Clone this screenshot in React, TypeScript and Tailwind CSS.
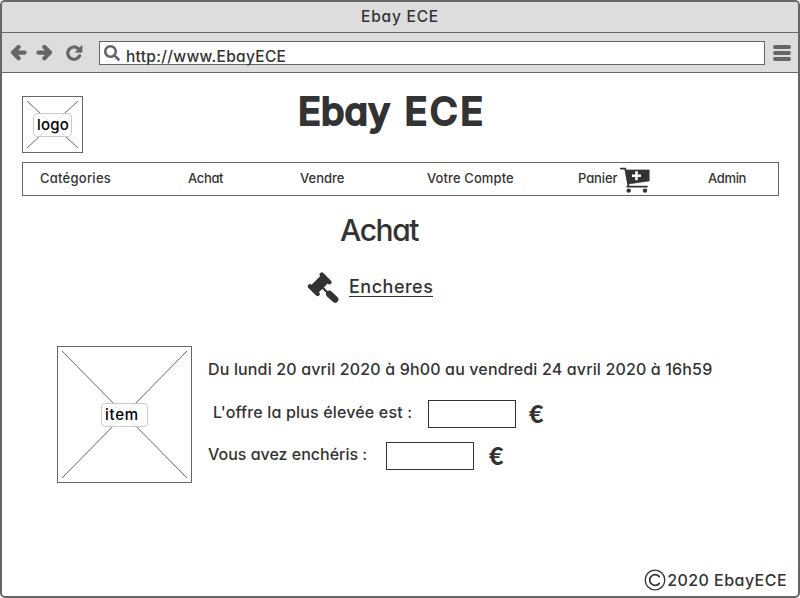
import { FaSearch } from "react-icons/fa";

function ArrowIcon({ flip = false }: { flip?: boolean }) {
  return (
    <svg width="17" height="16" viewBox="0 0 17 16" className={flip ? "-scale-x-100" : ""} fill="none" stroke="#666" strokeWidth="4.2" strokeLinecap="round" strokeLinejoin="round">
      <path d="M8.600 2 3 7.600l5.600 5.600M3.500 7.600H14.600" />
      <path d="M7.500 4.100v7L4 7.600z" strokeWidth="1" fill="#666" />
    </svg>
  );
}

function ReloadIcon() {
  return (
    <svg width="17" height="16" viewBox="0 0 17 16" fill="none" className="ml-[13px] shrink-0">
      <path d="M12.200 3.600A6.200 6.200 0 1 0 13.600 10.800" stroke="#666" strokeWidth="3.200" strokeLinecap="round" />
      <path d="M16 .6v6.600H9.400z" fill="#666" stroke="#666" strokeWidth=".8" strokeLinejoin="round" />
    </svg>
  );
}

function GavelIcon() {
  return (
    <svg width="33" height="32" viewBox="0 0 33 32" fill="none" stroke="#333" className="shrink-0">
      <path d="M14.800 2.600 22.400 10.200M3 14.400l7.600 7.600" strokeWidth="4.400" strokeLinecap="round" />
      <path d="M18 6.800 7 17.800" strokeWidth="10.400" />
      <path d="m14 14 7 7" strokeWidth="2.200" />
      <path d="m22.300 22 5.800 5.400" strokeWidth="6.600" strokeLinecap="round" />
    </svg>
  );
}

function CartIcon() {
  return (
    <svg width="31" height="27" viewBox="0 0 31 27" className="shrink-0">
      <path d="M.800 1.600h4.400l3.200 17.200" fill="none" stroke="#333" strokeWidth="1.700" strokeLinecap="round" />
      <path d="M6 2.900h23.200v11L8 17z" fill="#333" stroke="#333" strokeWidth=".6" strokeLinejoin="round" />
      <path d="M16.500 4.300v9M12 8.800h9" stroke="#fff" strokeWidth="2.600" />
      <path d="M7.200 19.600h19.800" stroke="#333" strokeWidth="1.700" strokeLinecap="round" />
      <circle cx="8.700" cy="23.600" r="2.200" fill="#333" />
      <circle cx="25" cy="23.600" r="2.200" fill="#333" />
    </svg>
  );
}

function Placeholder({ label, box, tag }: { label: string; box: string; tag: string }) {
  return (
    <div className={"relative shrink-0 border border-[#666] p-1 " + box}>
      <svg className="block h-full w-full" viewBox="0 0 100 100" preserveAspectRatio="none" stroke="#666">
        <path d="M0 0 100 100M100 0 0 100" vectorEffect="non-scaling-stroke" strokeWidth="1" />
      </svg>
      <span className={"absolute flex h-6 items-center rounded-[4px] border border-[#ccc] bg-white/80 pb-[2px] text-[15px] leading-none text-black " + tag}>
        {label}
      </span>
    </div>
  );
}

const nav = [
  { label: "Catégories", cls: "pl-px tracking-[0.25px]" },
  { label: "Achat", cls: "tracking-[-0.35px]" },
  { label: "Vendre", cls: "" },
  { label: "Votre Compte", cls: "tracking-[0.1px]" },
  { label: "Panier", cls: "pl-px tracking-[-0.1px]", cart: true },
  { label: "Admin", cls: "tracking-[-0.35px]" },
];

function Euro({ cls }: { cls: string }) {
  return <span className={"pb-[2px] font-['Lato',sans-serif] text-[25px] leading-none font-black " + cls}>€</span>;
}

export default function App() {
  return (
    <div className="flex h-[598px] w-[800px] flex-col overflow-hidden rounded-[5px] border-2 border-[#666] bg-white font-['Inter',sans-serif] font-medium whitespace-nowrap text-[#333] [font-feature-settings:'cv11']">
      <div className="flex h-[31px] shrink-0 items-center justify-center border-b border-[#666] bg-[#ddd] pb-px text-[15.5px] leading-none tracking-[0.8px]">
        Ebay ECE
      </div>
      <div className="flex h-10 shrink-0 items-center border-b border-[#666] bg-[#ddd] pl-2 text-[#666]">
        <ArrowIcon />
        <span className="ml-[9px]"><ArrowIcon flip /></span>
        <ReloadIcon />
        <div className="ml-4 flex h-6 w-[666px] shrink-0 items-start border border-[#666] bg-white pl-1">
          <FaSearch size={16} className="mt-[3px]" />
          <span className="mt-[7px] ml-[6px] text-[15.5px] leading-none tracking-[0.3px] text-[#333]">http://www.EbayECE</span>
        </div>
        <div className="ml-2 flex flex-col gap-[2px]">
          <i className="h-1 w-[18px] rounded-[2px] bg-[#666]" />
          <i className="h-1 w-[18px] rounded-[2px] bg-[#666]" />
          <i className="h-1 w-[18px] rounded-[2px] bg-[#666]" />
        </div>
      </div>

      <main className="flex grow flex-col pt-[23px] pl-5">
        <header className="flex">
          <Placeholder label="logo" box="h-[57px] w-[61px]" tag="top-4 left-[10px] w-[39px] pl-[3px] tracking-[0.2px]" />
          <h1 className="ml-[215px] h-[30px] text-[38px] leading-[30px] font-medium [-webkit-text-stroke:2px_#333]">
            <span className="tracking-[0.1px]">Ebay </span>
            <span className="ml-[4px] tracking-[2.500px]">ECE</span>
          </h1>
        </header>

        <nav className="mt-[9px] grid h-[34px] w-[757px] shrink-0 grid-cols-[149px_112px_127px_150px_131px_1fr] items-center border border-[#666] pl-4 text-[13px] leading-none">
          {nav.map((n) => (
            <a key={n.label} className="flex h-[31px] items-center">
              <span className={"pb-[2px] " + n.cls}>{n.label}</span>
              {n.cart && <span className="ml-[3px] pt-[3px]"><CartIcon /></span>}
            </a>
          ))}
        </nav>

        <h2 className="mt-[17px] ml-[318px] text-[30px] leading-[35px] font-[450] tracking-[-1.400px]">Achat</h2>

        <div className="mt-6 ml-[285px] flex h-[31px] items-start">
          <GavelIcon />
          <a className="ml-[9px] h-[25px] w-[84px] border-b border-[#333] pt-[6px] text-[18px] leading-[18px] tracking-[0.5px]">Encheres</a>
        </div>

        <section className="mt-[43px] ml-[35px] flex">
          <Placeholder label="item" box="h-[137px] w-[135px]" tag="top-14 left-[43px] w-[47px] pl-[3px] tracking-[0.7px]" />
          <div className="flex flex-col pt-[13px] pl-[15px] text-[16px] leading-none">
            <p className="h-5 pl-px leading-5 tracking-[0.15px]">Du lundi 20 avril 2020 à 9h00 au vendredi 24 avril 2020 à 16h59</p>
            <div className="mt-[21px] flex h-7 items-center">
              <span className="w-[221px] pb-1 pl-[6px] tracking-[0.16px]">L'offre la plus élevée est :</span>
              <span className="h-7 w-[88px] border border-[#333]" />
              <Euro cls="ml-[13px]" />
            </div>
            <div className="mt-[14px] flex h-7 items-center">
              <span className="w-[179px] pb-1 pl-[1px]">Vous avez enchéris :</span>
              <span className="h-7 w-[88px] border border-[#333]" />
              <Euro cls="ml-[15px]" />
            </div>
          </div>
        </section>

        <footer className="mt-auto mr-[11px] mb-[5px] flex h-[22px] items-center justify-end text-[16px] leading-none tracking-[0.45px]">
          <svg width="22" height="22" viewBox="0 0 22 22" fill="none" stroke="#333" className="mr-px">
            <circle cx="11" cy="11" r="9.800" strokeWidth="1.300" />
            <path d="M15.300 7.600a5.400 5.400 0 1 0 0 6.800" strokeWidth="1.700" strokeLinecap="round" />
          </svg>
          2020 EbayECE
        </footer>
      </main>
    </div>
  );
}
